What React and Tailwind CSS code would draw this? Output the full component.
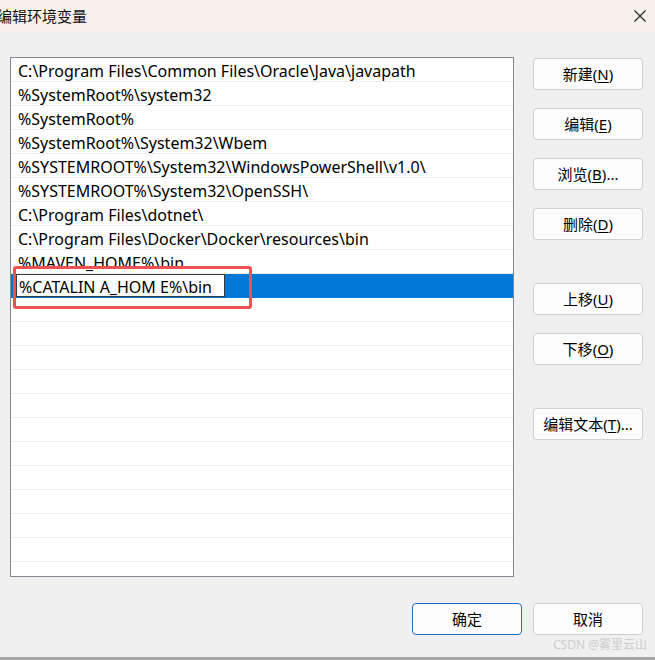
const paths = [
  "C:\\Program Files\\Common Files\\Oracle\\Java\\javapath",
  "%SystemRoot%\\system32",
  "%SystemRoot%",
  "%SystemRoot%\\System32\\Wbem",
  "%SYSTEMROOT%\\System32\\WindowsPowerShell\\v1.0\\",
  "%SYSTEMROOT%\\System32\\OpenSSH\\",
  "C:\\Program Files\\dotnet\\",
  "C:\\Program Files\\Docker\\Docker\\resources\\bin",
  "%MAVEN_HOME%\\bin",
];

const sideButtons = [
  { label: "新建", key: "N", gap: "mt-0" },
  { label: "编辑", key: "E", gap: "mt-[18px]" },
  { label: "浏览", key: "B", more: true, gap: "mt-[18px]" },
  { label: "删除", key: "D", gap: "mt-[18px]" },
  { label: "上移", key: "U", gap: "mt-[43px]" },
  { label: "下移", key: "O", gap: "mt-[18px]" },
  { label: "编辑文本", key: "T", more: true, gap: "mt-[43px]" },
];

function WinButton({ children, primary, className = "" }) {
  return (
    <button
      className={`h-[32px] w-[110px] rounded-[4px] bg-[#fdfdfd] text-[15px] text-black flex items-center justify-center border ${
        primary ? "border-[#1f6fc0]" : "border-[#d0d0d0]"
      } ${className}`}
    >
      {children}
    </button>
  );
}

export default function App() {
  const emptyRows = Array.from({ length: 12 });

  return (
    <div
      className="relative w-[655px] h-[660px] bg-[#f0f0f0] flex flex-col overflow-hidden"
      style={{ fontFamily: '"Noto Sans", "Noto Sans CJK SC", sans-serif' }}
    >
      {/* title bar */}
      <div className="h-[32px] bg-[#f5f1ea] flex items-center justify-between shrink-0">
        <span className="text-[15px] text-[#111] -ml-[3px]">编辑环境变量</span>
        <svg width="14" height="14" viewBox="0 0 14 14" className="mr-[8px]">
          <path d="M1.5 1.5 L12.5 12.5 M12.5 1.5 L1.5 12.5" stroke="#222" strokeWidth="1.1" />
        </svg>
      </div>

      <div className="flex pl-[10px] pt-[25px]">
        {/* list */}
        <div className="w-[504px] h-[520px] border border-[#868692] bg-white overflow-hidden">
          {paths.map((p) => (
            <div
              key={p}
              className="h-[24px] border-b border-[#ececec] pl-[7px] pt-[3px] flex items-center text-[16px] text-black whitespace-nowrap"
            >
              {p}
            </div>
          ))}
          <div className="h-[24px] bg-[#0078d7] border-b border-[#0078d7] pl-[5px] flex items-center">
            <div className="h-[23px] w-[209px] bg-white border border-[#3a3a3a] pl-[2px] pt-[3px] flex items-center text-[16px] text-black whitespace-nowrap">
              %CATALIN A_HOM E%\bin
            </div>
          </div>
          {emptyRows.map((_, i) => (
            <div key={i} className="h-[24px] border-b border-[#ececec]" />
          ))}
        </div>

        {/* side buttons */}
        <div className="ml-[19px] pt-px flex flex-col">
          {sideButtons.map((b) => (
            <WinButton key={b.key} className={b.gap}>
              {b.label}(<span className="underline underline-offset-2">{b.key}</span>){b.more ? "..." : ""}
            </WinButton>
          ))}
        </div>
      </div>

      {/* bottom buttons */}
      <div className="flex justify-end gap-[11px] pr-[12px] pt-[26px]">
        <WinButton primary>确定</WinButton>
        <WinButton>取消</WinButton>
      </div>

      <div className="mt-auto h-[3px] bg-[#a6a6a6]" />

      {/* annotation */}
      <div className="absolute left-[13px] top-[266px] w-[239px] h-[43px] border-[3px] border-[#f0504e] rounded-[3px]" />

      {/* watermark */}
      <div className="absolute right-[8px] bottom-[6px] text-[12px] text-[#cdcdcd] whitespace-nowrap">
        CSDN @雾里云山
      </div>
    </div>
  );
}
